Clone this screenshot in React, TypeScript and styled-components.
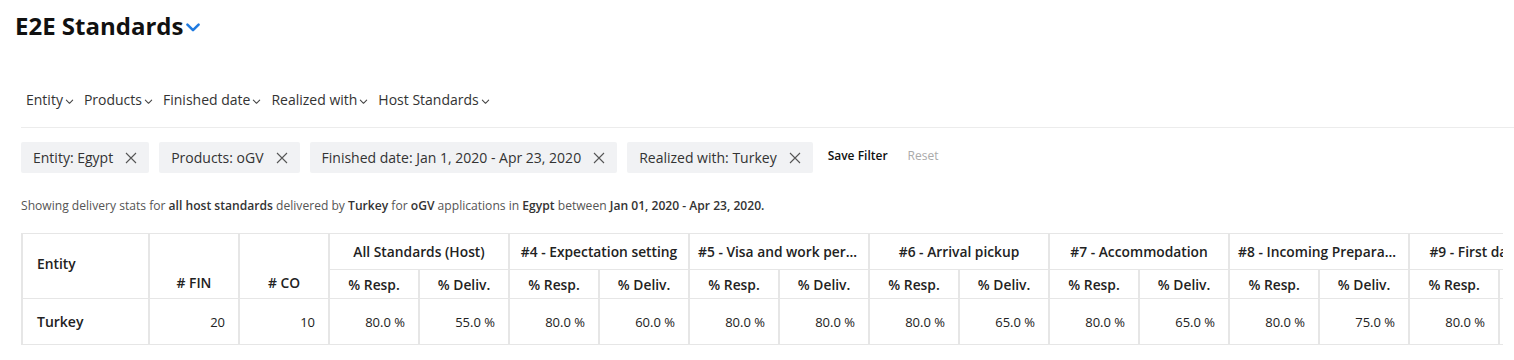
import React from 'react';
import styled, { createGlobalStyle } from 'styled-components';

const GlobalStyle = createGlobalStyle`
  body {
    margin: 0;
    font-family: "Open Sans", "Liberation Sans", sans-serif;
    color: #222;
    background: #fff;
  }
`;

const filters = ['Entity', 'Products', 'Finished date', 'Realized with', 'Host Standards'];
const chips = ['Entity: Egypt', 'Products: oGV', 'Finished date: Jan 1, 2020 - Apr 23, 2020', 'Realized with: Turkey'];

const groups = [
  { name: 'All Standards (Host)', resp: '80.0 %', deliv: '55.0 %' },
  { name: '#4 - Expectation setting', resp: '80.0 %', deliv: '60.0 %' },
  { name: '#5 - Visa and work permit', resp: '80.0 %', deliv: '80.0 %' },
  { name: '#6 - Arrival pickup', resp: '80.0 %', deliv: '65.0 %' },
  { name: '#7 - Accommodation', resp: '80.0 %', deliv: '65.0 %' },
  { name: '#8 - Incoming Preparation Seminar', resp: '80.0 %', deliv: '75.0 %' },
  { name: '#9 - First day of work', resp: '80.0 %', deliv: '70.0 %' },
];

const Chevron = ({ color = '#444', size = 9, width = 1.2 }: { color?: string; size?: number; width?: number }) => (
  <svg width={size} height={size} viewBox="0 0 10 10" fill="none">
    <path d="M1.5 3.5 L5 7 L8.5 3.5" stroke={color} strokeWidth={width} strokeLinecap="round" strokeLinejoin="round" />
  </svg>
);

const Close = () => (
  <svg width="12" height="12" viewBox="0 0 12 12" fill="none">
    <path d="M1 1 L11 11 M11 1 L1 11" stroke="#555" strokeWidth="1.1" />
  </svg>
);

const App = () => {
  return (
    <Page>
      <GlobalStyle />
      <TitleRow>
        <Title>E2E Standards</Title>
        <Chevron color="#1f7ae0" size={16} width={1.6} />
      </TitleRow>

      <FilterBar>
        {filters.map((f) => (
          <FilterItem key={f}>
            {f}
            <Chevron />
          </FilterItem>
        ))}
      </FilterBar>

      <ChipRow>
        {chips.map((c) => (
          <Chip key={c}>
            {c}
            <Close />
          </Chip>
        ))}
        <TextButton primary>Save Filter</TextButton>
        <TextButton>Reset</TextButton>
      </ChipRow>

      <Summary>
        Showing delivery stats for <b>all host standards</b> delivered by <b>Turkey</b> for <b>oGV</b> applications in{' '}
        <b>Egypt</b> between <b>Jan 01, 2020 - Apr 23, 2020.</b>
      </Summary>

      <TableWrap>
        <Table>
          <colgroup>
            <col style={{ width: 127 }} />
            <col style={{ width: 90 }} />
            <col style={{ width: 90 }} />
            {groups.map((g) => (
              <React.Fragment key={g.name}>
                <col style={{ width: 90 }} />
                <col style={{ width: 90 }} />
              </React.Fragment>
            ))}
          </colgroup>
          <thead>
            <tr>
              <Th rowSpan={2} align="left" valign="middle">
                Entity
              </Th>
              <Th rowSpan={2} valign="bottom">
                # FIN
              </Th>
              <Th rowSpan={2} valign="bottom">
                # CO
              </Th>
              {groups.map((g) => (
                <GroupTh key={g.name} colSpan={2}>
                  {g.name}
                </GroupTh>
              ))}
            </tr>
            <SubRow>
              {groups.map((g) => (
                <React.Fragment key={g.name}>
                  <Th>% Resp.</Th>
                  <Th>% Deliv.</Th>
                </React.Fragment>
              ))}
            </SubRow>
          </thead>
          <tbody>
            <BodyRow>
              <Td bold align="left">
                Turkey
              </Td>
              <Td>20</Td>
              <Td>10</Td>
              {groups.map((g) => (
                <React.Fragment key={g.name}>
                  <Td>{g.resp}</Td>
                  <Td>{g.deliv}</Td>
                </React.Fragment>
              ))}
            </BodyRow>
          </tbody>
        </Table>
      </TableWrap>
    </Page>
  );
};

export default App;

const Page = styled.div`
  width: 1514px;
  overflow: hidden;
`;

const TitleRow = styled.div`
  display: flex;
  align-items: center;
  gap: 2px;
  padding: 8px 0 0 15px;
  height: 36px;

  svg {
    margin-top: 2px;
  }
`;

const Title = styled.h1`
  margin: 0;
  font-size: 24px;
  font-weight: 700;
  color: #111;
  line-height: 32px;
`;

const FilterBar = styled.div`
  display: flex;
  align-items: center;
  gap: 10px;
  margin: 44px 0 0 21px;
  padding: 0 0 15px 5px;
  border-bottom: 1px solid #ececec;
`;

const FilterItem = styled.div`
  display: flex;
  align-items: center;
  gap: 2px;
  font-size: 14px;
  line-height: 24px;
  color: #333;

  svg {
    margin-top: 2px;
  }
`;

const ChipRow = styled.div`
  display: flex;
  align-items: center;
  gap: 10px;
  margin: 14px 0 0 21px;
`;

const Chip = styled.div`
  display: flex;
  align-items: center;
  gap: 12px;
  height: 31px;
  padding: 0 12px;
  background: #f1f2f4;
  border-radius: 2px;
  font-size: 14px;
  color: #333;
`;

const TextButton = styled.span<{ primary?: boolean }>`
  font-size: 12px;
  font-weight: ${(p) => (p.primary ? 600 : 400)};
  color: ${(p) => (p.primary ? '#111' : '#aaa')};
  margin: 0 ${(p) => (p.primary ? '10px' : '0')} 4px ${(p) => (p.primary ? '5px' : '0')};
`;

const Summary = styled.p`
  margin: 25px 0 0 21px;
  font-size: 12.1px;
  line-height: 16px;
  color: #555;

  b {
    font-weight: 600;
    color: #333;
  }
`;

const TableWrap = styled.div`
  margin: 19px 0 0 21px;
  width: 1482px;
  overflow: hidden;
`;

const Table = styled.table`
  border-collapse: collapse;
  table-layout: fixed;
  width: ${127 + 180 + 14 * 90}px;
  font-size: 13.8px;
  color: #222;
`;

const Th = styled.th<{ align?: string; valign?: string }>`
  border: 1px solid #e6e6e6;
  border-left-width: 2px;
  border-right-width: 2px;
  font-weight: 600;
  text-align: ${(p) => p.align ?? 'center'};
  vertical-align: ${(p) => p.valign ?? 'middle'};
  padding: 0 14px 6px;
  white-space: nowrap;
  overflow: hidden;
  text-overflow: ellipsis;
`;

const GroupTh = styled(Th)`
  height: 35px;
  padding: 0 8px;
`;

const SubRow = styled.tr`
  height: 29px;

  th {
    padding: 0 6px;
  }
`;

const BodyRow = styled.tr`
  height: 46px;
`;

const Td = styled.td<{ align?: string; bold?: boolean }>`
  border: 1px solid #e6e6e6;
  border-left-width: 2px;
  border-right-width: 2px;
  text-align: ${(p) => p.align ?? 'right'};
  font-size: ${(p) => (p.bold ? '14px' : '13px')};
  font-weight: ${(p) => (p.bold ? 600 : 400)};
  padding: 0 13px 0 14px;
  white-space: nowrap;
`;
